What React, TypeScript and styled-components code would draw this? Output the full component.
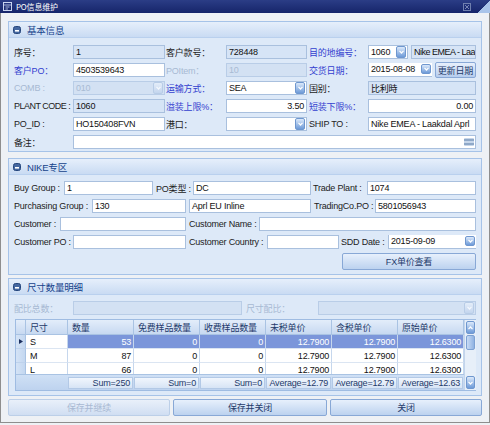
import React from "react";
import styled, { createGlobalStyle } from "styled-components";

type Tone = "normal" | "blue" | "off";
type BoxTone = "edit" | "ro" | "off";

const GlobalStyle = createGlobalStyle`
  html, body {
    margin: 0;
    padding: 0;
    background: #ffffff;
  }
  body {
    font-family: "Liberation Sans", "Noto Sans CJK SC", sans-serif;
    font-size: 9px;
    letter-spacing: -0.2px;
    color: #1f1f1f;
  }
`;

const Window = styled.div`
  width: 490px;
  height: 425px;
  display: flex;
  flex-direction: column;
  background: #eef1f5;
  overflow: hidden;
`;

const TitleBar = styled.div`
  height: 13px;
  flex: none;
  display: flex;
  align-items: center;
  background: linear-gradient(#2b3d86, #16256a);
  color: #ffffff;
  padding-left: 3px;
  gap: 4px;
`;

const TitleText = styled.span`
  flex: 1;
  font-family: "Noto Sans CJK SC", sans-serif;
  font-size: 8px;
`;

const CloseBox = styled.span`
  width: 6px;
  height: 6px;
  border: 1px solid #6f7fae;
  margin-right: 3px;
  display: flex;
  align-items: center;
  justify-content: center;
`;

const Corner = styled.span`
  width: 12px;
  align-self: stretch;
  background: linear-gradient(to bottom right, transparent 50%, #a9c4ea 50%);
`;

const Frame = styled.div`
  flex: 1;
  display: flex;
  flex-direction: column;
  border: 1px solid #8e8e8e;
  border-top: none;
  padding: 8px 7px 0 7px;
  margin-bottom: 2px;
`;

const Panel = styled.section<{ $gap: number }>`
  border: 1px solid #a6c3e8;
  background: #dde9f8;
  margin-bottom: ${(p) => p.$gap}px;
  display: flex;
  flex-direction: column;
`;

const PanelHead = styled.div`
  height: 15px;
  display: flex;
  align-items: center;
  gap: 6px;
  padding-left: 4px;
  background: linear-gradient(#e6effb, #c9dbf3);
  border-bottom: 1px solid #b9d0ee;
  color: #15428b;
  font-size: 9.5px;
`;

const PanelBody = styled.div<{ $pt: number; $pb: number }>`
  padding: ${(p) => p.$pt}px 5px ${(p) => p.$pb}px 5px;
  display: flex;
  flex-direction: column;
  gap: 4px;
`;

const FieldGrid = styled.div`
  display: grid;
  grid-template-columns: 59px 92px 61px 81px 61px 108px;
  grid-auto-rows: 14px;
  row-gap: 4px;
  align-items: center;
`;

const Row = styled.div<{ $end?: boolean; $h?: number }>`
  display: flex;
  align-items: center;
  height: ${(p) => p.$h ?? 14}px;
  justify-content: ${(p) => (p.$end ? "flex-end" : "flex-start")};
`;

const labelColor = { normal: "#222222", blue: "#3340cf", off: "#a7b9d3" };

const Label = styled.span<{ $tone?: Tone; $w?: number; $pl?: number; $tight?: boolean }>`
  flex: none;
  width: ${(p) => (p.$w ? `${p.$w}px` : "auto")};
  padding-left: ${(p) => p.$pl ?? 0}px;
  box-sizing: border-box;
  white-space: nowrap;
  letter-spacing: ${(p) => (p.$tight ? "-0.5px" : "-0.2px")};
  color: ${(p) => labelColor[p.$tone ?? "normal"]};
`;

const boxBg = { edit: "#ffffff", ro: "#d6e4f6", off: "#d3e1f3" };
const boxBorder = { edit: "#a9c0de", ro: "#a9c0de", off: "#b9cde7" };

const Box = styled.div<{
  $tone?: BoxTone;
  $w?: number;
  $ml?: number;
  $right?: boolean;
  $span?: number;
  $tight?: boolean;
}>`
  flex: none;
  width: ${(p) => (p.$w ? `${p.$w}px` : "auto")};
  margin-left: ${(p) => p.$ml ?? 0}px;
  grid-column: ${(p) => (p.$span ? `span ${p.$span}` : "auto")};
  height: 14px;
  box-sizing: border-box;
  display: flex;
  align-items: center;
  justify-content: ${(p) => (p.$right ? "flex-end" : "flex-start")};
  padding: 0 2px;
  border: 1px solid ${(p) => boxBorder[p.$tone ?? "edit"]};
  background: ${(p) => boxBg[p.$tone ?? "edit"]};
  color: ${(p) => (p.$tone === "off" ? "#a9bbd4" : "#111111")};
  letter-spacing: ${(p) => (p.$tight ? "-0.5px" : "-0.2px")};
  white-space: nowrap;
  overflow: hidden;
`;

const BoxText = styled.span`
  flex: 1;
  overflow: hidden;
`;

const Pair = styled.div`
  display: flex;
  align-items: center;
  justify-content: space-between;
  gap: 2px;
`;

const DropBtn = styled.span<{ $off?: boolean; $short?: boolean }>`
  flex: none;
  width: 8px;
  height: ${(p) => (p.$short ? "8px" : "10px")};
  align-self: ${(p) => (p.$short ? "flex-start" : "center")};
  margin-right: -1px;
  border-radius: 2px;
  border: 1px solid ${(p) => (p.$off ? "#b8cce6" : "#6f97cf")};
  background: ${(p) =>
    p.$off
      ? "linear-gradient(#e4edf9, #c3d5ee)"
      : "linear-gradient(#dbe9fb, #6d9ad8)"};
  display: flex;
  align-items: center;
  justify-content: center;
`;

const DateBox = styled(Box)`
  align-items: flex-start;
  padding-top: 1px;
  border-right: none;
  border-top: none;
`;

const SmallBtn = styled.div`
  height: 16px;
  box-sizing: border-box;
  padding: 0 2px;
  display: flex;
  align-items: center;
  justify-content: center;
  border: 1px solid #88a8d6;
  border-radius: 2px;
  background: linear-gradient(#e7f0fc, #b6cdee);
  color: #1e3a6a;
  white-space: nowrap;
`;

const WideBtn = styled(SmallBtn)<{ $w: number; $off?: boolean }>`
  width: ${(p) => p.$w}px;
  height: 17px;
  flex: none;
  color: ${(p) => (p.$off ? "#a8b9d3" : "#1e3a6a")};
  border-color: ${(p) => (p.$off ? "#bccfe8" : "#88a8d6")};
  background: ${(p) =>
    p.$off
      ? "linear-gradient(#e9f0fa, #d0def2)"
      : "linear-gradient(#e7f0fc, #bcd2ef)"};
`;

const MemoBtn = styled.span`
  width: 10px;
  height: 8px;
  margin-right: -1px;
  display: flex;
  flex-direction: column;
  justify-content: space-around;
  border-radius: 1px;
  background: #c6d6ea;
`;

const MemoBar = styled.span`
  height: 2px;
  background: #8ea8c8;
`;

const Footer = styled.div`
  display: flex;
  gap: 3px;
  margin-top: 3px;
`;

/* ---------- grid ---------- */

const GridBox = styled.div`
  margin-left: 1px;
  height: 72px;
  box-sizing: border-box;
  border: 1px solid #9fbce2;
  display: flex;
  background: #ffffff;
`;

const Table = styled.div`
  flex: 1;
  display: flex;
  flex-direction: column;
`;

const GRID_COLS = "10px 42px repeat(6, 66px)";

const HeadRow = styled.div`
  display: grid;
  grid-template-columns: ${GRID_COLS};
  height: 15px;
  flex: none;
`;

const HeadCell = styled.div`
  box-sizing: border-box;
  border-right: 1px solid #a9c3e3;
  border-bottom: 1px solid #a9c3e3;
  background: linear-gradient(#e3edfa, #c7d9f1);
  color: #1e3a6a;
  padding-left: 4px;
  display: flex;
  align-items: center;
  white-space: nowrap;
  overflow: hidden;
`;

const Rows = styled.div`
  height: 39px;
  flex: none;
  overflow: hidden;
`;

const DataRow = styled.div`
  display: grid;
  grid-template-columns: ${GRID_COLS};
  height: 14px;
`;

const IndCell = styled.div`
  box-sizing: border-box;
  border-right: 1px solid #a9c3e3;
  border-bottom: 1px solid #bed2ec;
  background: linear-gradient(to right, #d4e3f6, #c3d7f0);
  display: flex;
  align-items: center;
  justify-content: center;
`;

const Cell = styled.div<{ $sel?: boolean; $num?: boolean }>`
  box-sizing: border-box;
  border-right: 1px solid #c6d7ed;
  border-bottom: 1px solid #dbe5f2;
  background: ${(p) => (p.$sel ? "#7b96da" : "#ffffff")};
  color: ${(p) => (p.$sel ? "#ffffff" : "#111111")};
  display: flex;
  align-items: center;
  justify-content: ${(p) => (p.$num ? "flex-end" : "flex-start")};
  padding: ${(p) => (p.$num ? "0 2px 0 0" : "0 0 0 4px")};
  white-space: nowrap;
`;

const FootRow = styled.div`
  flex: 1;
  display: grid;
  grid-template-columns: 52px repeat(6, 66px);
  background: linear-gradient(#cfe0f5, #bed3ef);
  border-top: 1px solid #a9c3e3;
`;

const FootCell = styled.div<{ $blank?: boolean }>`
  box-sizing: border-box;
  margin: 2px 1px 1px 0;
  border: ${(p) => (p.$blank ? "none" : "1px solid #b3c9e6")};
  background: ${(p) =>
    p.$blank ? "transparent" : "linear-gradient(#f1f6fd, #d7e4f5)"};
  color: #1e3a6a;
  display: flex;
  align-items: center;
  justify-content: flex-end;
  padding-right: 2px;
  white-space: nowrap;
`;

const ScrollBar = styled.div`
  width: 11px;
  flex: none;
  display: flex;
  flex-direction: column;
  background: #e7eff9;
  border-left: 1px solid #c3d5ec;
`;

const ScrollBtn = styled.span`
  height: 11px;
  margin: 1px;
  border-radius: 2px;
  border: 1px solid #6f97cf;
  background: linear-gradient(#dbe9fb, #6d9ad8);
  display: flex;
  align-items: center;
  justify-content: center;
`;

const Thumb = styled.span`
  height: 13px;
  margin: 0 1px;
  border-radius: 2px;
  border: 1px solid #7da1d3;
  background: linear-gradient(to right, #c8dbf5, #8fb2e2);
`;

const Track = styled.span`
  flex: 1;
`;

/* ---------- small drawings ---------- */

const Chevron = ({ up, color = "#ffffff" }: { up?: boolean; color?: string }) => (
  <svg width="5" height="4" viewBox="0 0 5 4">
    <path
      d={up ? "M0.5 3.2 L2.5 1 L4.5 3.2" : "M0.5 0.8 L2.5 3 L4.5 0.8"}
      stroke={color}
      strokeWidth="1.2"
      fill="none"
    />
  </svg>
);

const CollapseIcon = () => (
  <svg width="8" height="8" viewBox="0 0 8 8">
    <rect x="0.5" y="0.5" width="7" height="7" rx="2" fill="#4467a0" stroke="#26477d" />
    <rect x="2" y="4" width="4" height="1.6" fill="#ffffff" />
  </svg>
);

const FormIcon = () => (
  <svg width="9" height="9" viewBox="0 0 9 9">
    <rect x="0.5" y="0.5" width="8" height="8" fill="none" stroke="#c9d4f0" />
    <path d="M0.5 3 H8.5 M2.5 5 H6.5 M2.5 7 H5" stroke="#c9d4f0" strokeWidth="0.8" />
  </svg>
);

const XIcon = () => (
  <svg width="4" height="4" viewBox="0 0 4 4">
    <path d="M0 0 L4 4 M4 0 L0 4" stroke="#8e9cc4" strokeWidth="0.8" />
  </svg>
);

const Select = ({
  value,
  tone = "edit",
  w,
  right,
}: {
  value: string;
  tone?: BoxTone;
  w?: number;
  right?: boolean;
}) => (
  <Box $tone={tone} $w={w} $right={right}>
    <BoxText>{value}</BoxText>
    <DropBtn $off={tone === "off"}>
      <Chevron color={tone === "off" ? "#f4f8fd" : "#ffffff"} />
    </DropBtn>
  </Box>
);

const DateField = ({ value, w }: { value: string; w?: number }) => (
  <DateBox $w={w}>
    <BoxText>{value}</BoxText>
    <DropBtn $short>
      <Chevron />
    </DropBtn>
  </DateBox>
);

/* ---------- data ---------- */

const columns = ["数量", "免费样品数量", "收费样品数量", "未税单价", "含税单价", "原始单价"];

const rows = [
  { size: "S", vals: ["53", "0", "0", "12.7900", "12.7900", "12.6300"], sel: true },
  { size: "M", vals: ["87", "0", "0", "12.7900", "12.7900", "12.6300"], sel: false },
  { size: "L", vals: ["66", "0", "0", "12.7900", "12.7900", "12.6300"], sel: false },
];

const totals = ["Sum=250", "Sum=0", "Sum=0", "Average=12.79", "Average=12.79", "Average=12.63"];

const SizeGrid = () => (
  <GridBox>
    <Table>
      <HeadRow>
        <HeadCell />
        <HeadCell>尺寸</HeadCell>
        {columns.map((c) => (
          <HeadCell key={c}>{c}</HeadCell>
        ))}
      </HeadRow>
      <Rows>
        {rows.map((r) => (
          <DataRow key={r.size}>
            <IndCell>
              {r.sel && (
                <svg width="4" height="5" viewBox="0 0 4 5">
                  <path d="M0 0 L4 2.5 L0 5 Z" fill="#1b2f5e" />
                </svg>
              )}
            </IndCell>
            <Cell>{r.size}</Cell>
            {r.vals.map((v, i) => (
              <Cell key={i} $num $sel={r.sel}>
                {v}
              </Cell>
            ))}
          </DataRow>
        ))}
      </Rows>
      <FootRow>
        <FootCell $blank />
        {totals.map((t, i) => (
          <FootCell key={i}>{t}</FootCell>
        ))}
      </FootRow>
    </Table>
    <ScrollBar>
      <ScrollBtn>
        <Chevron up />
      </ScrollBtn>
      <Thumb />
      <Track />
      <ScrollBtn>
        <Chevron />
      </ScrollBtn>
    </ScrollBar>
  </GridBox>
);

export default function App() {
  return (
    <>
      <GlobalStyle />
      <Window>
        <TitleBar>
          <FormIcon />
          <TitleText>PO信息维护</TitleText>
          <CloseBox>
            <XIcon />
          </CloseBox>
          <Corner />
        </TitleBar>
        <Frame>
          <Panel $gap={6}>
            <PanelHead>
              <CollapseIcon />
              基本信息
            </PanelHead>
            <PanelBody $pt={7} $pb={2}>
              <FieldGrid>
                <Label>序号：</Label>
                <Box $tone="ro">1</Box>
                <Label $pl={1}>客户款号：</Label>
                <Box $tone="ro">728448</Box>
                <Label $tone="blue" $pl={2}>目的地编号：</Label>
                <Pair>
                  <Select value="1060" w={40} />
                  <Box $tone="ro" $w={65} $tight>
                    Nike EMEA - Laak
                  </Box>
                </Pair>

                <Label $tone="blue">客户PO：</Label>
                <Box>4503539643</Box>
                <Label $tone="off" $pl={1}>POItem：</Label>
                <Box $tone="off">10</Box>
                <Label $tone="blue" $pl={2}>交货日期：</Label>
                <Pair>
                  <DateField value="2015-08-08" w={64} />
                  <SmallBtn>更新日期</SmallBtn>
                </Pair>

                <Label $tone="off">COMB :</Label>
                <Select value="010" tone="off" />
                <Label $tone="blue" $pl={1}>运输方式：</Label>
                <Select value="SEA" />
                <Label $pl={2}>国别：</Label>
                <Box $tone="ro">比利時</Box>

                <Label $tight>PLANT CODE :</Label>
                <Box $tone="ro">1060</Box>
                <Label $tone="blue" $pl={1}>溢装上限%：</Label>
                <Box $right>3.50</Box>
                <Label $tone="blue" $pl={2}>短装下限%：</Label>
                <Box $right>0.00</Box>

                <Label>PO_ID :</Label>
                <Box>HO150408FVN</Box>
                <Label $pl={1}>港口：</Label>
                <Select value="" />
                <Label $pl={2}>SHIP TO :</Label>
                <Box>Nike EMEA - Laakdal Aprl</Box>

                <Label>备注：</Label>
                <Box $span={5}>
                  <BoxText />
                  <MemoBtn>
                    <MemoBar />
                    <MemoBar />
                  </MemoBtn>
                </Box>
              </FieldGrid>
            </PanelBody>
          </Panel>

          <Panel $gap={3}>
            <PanelHead>
              <CollapseIcon />
              NIKE专区
            </PanelHead>
            <PanelBody $pt={6} $pb={4}>
              <Row>
                <Label $w={50}>Buy Group :</Label>
                <Box $w={89}>1</Box>
                <Label $w={40} $pl={3}>PO类型 :</Label>
                <Box $w={118}>DC</Box>
                <Label $w={56} $pl={2}>Trade Plant :</Label>
                <Box $w={109}>1074</Box>
              </Row>
              <Row>
                <Label $w={78}>Purchasing Group :</Label>
                <Box $w={94}>130</Box>
                <Box $w={122} $ml={3}>
                  Aprl EU Inline
                </Box>
                <Label $w={64} $pl={3}>TradingCo.PO :</Label>
                <Box $w={101}>5801056943</Box>
              </Row>
              <Row>
                <Label $w={46}>Customer :</Label>
                <Box $w={126} />
                <Label $w={73} $pl={3}>Customer Name :</Label>
                <Box $w={217} />
              </Row>
              <Row>
                <Label $w={59}>Customer PO :</Label>
                <Box $w={113} />
                <Label $w={81} $pl={3}>Customer Country :</Label>
                <Box $w={72} />
                <Label $w={49} $pl={2}>SDD Date :</Label>
                <DateField value="2015-09-09" w={88} />
              </Row>
              <Row $end $h={17}>
                <WideBtn $w={134}>FX单价查看</WideBtn>
              </Row>
            </PanelBody>
          </Panel>

          <Panel $gap={0}>
            <PanelHead>
              <CollapseIcon />
              尺寸数量明细
            </PanelHead>
            <PanelBody $pt={6} $pb={4}>
              <Row>
                <Label $w={59} $tone="off">配比总数：</Label>
                <Box $w={169} $tone="off" />
                <Label $w={76} $pl={4} $tone="off">尺寸配比：</Label>
                <Select value="" tone="off" w={158} />
              </Row>
              <SizeGrid />
            </PanelBody>
          </Panel>

          <Footer>
            <WideBtn $w={162} $off>保存并继续</WideBtn>
            <WideBtn $w={154}>保存并关闭</WideBtn>
            <WideBtn $w={152}>关闭</WideBtn>
          </Footer>
        </Frame>
      </Window>
    </>
  );
}
